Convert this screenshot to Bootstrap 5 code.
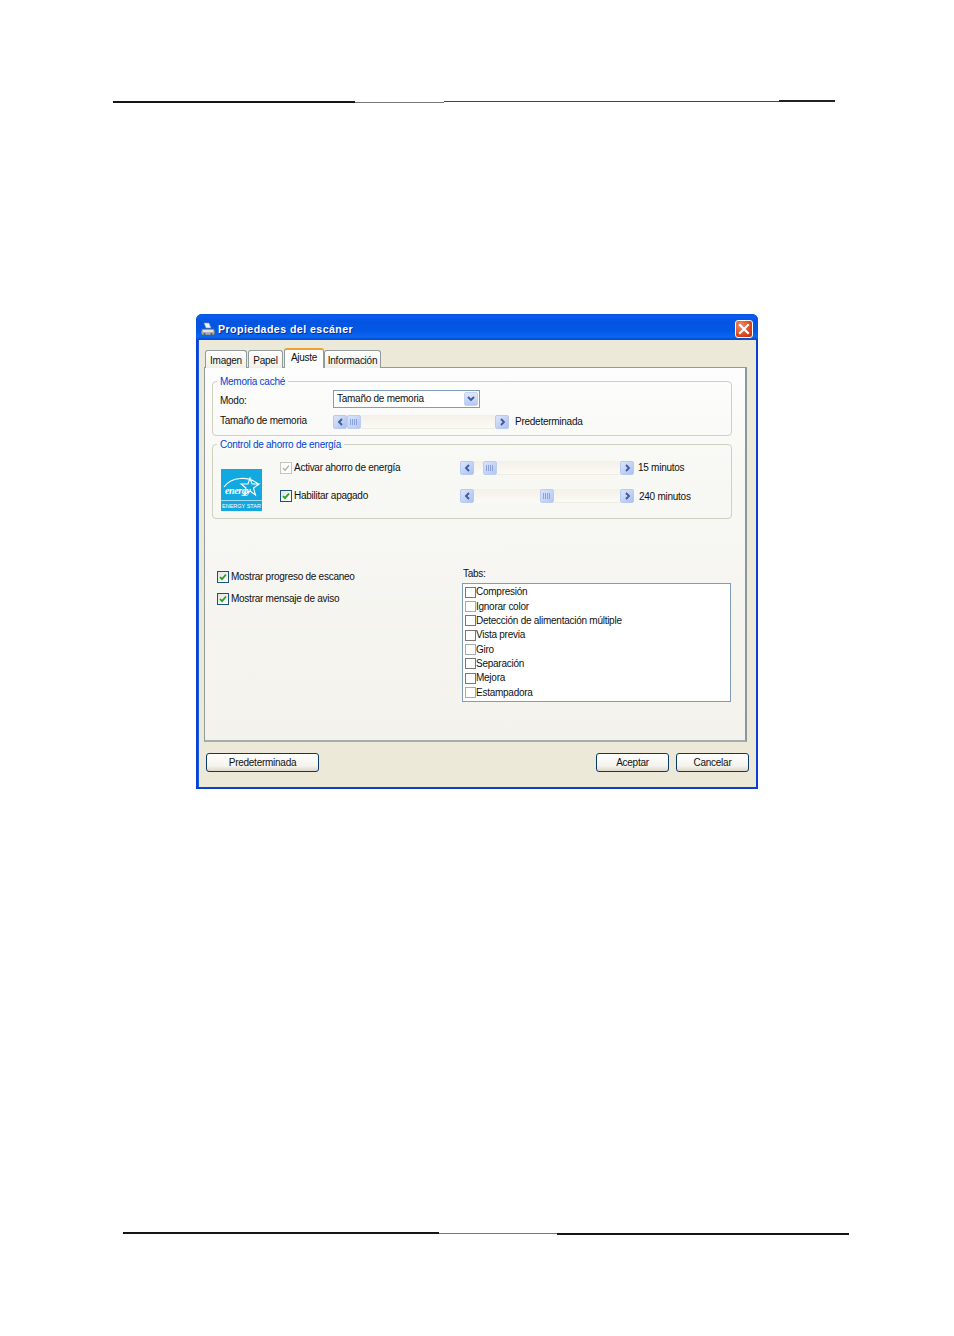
<!DOCTYPE html>
<html lang="es">
<head>
<meta charset="utf-8">
<title>Propiedades del escáner</title>
<link href="https://cdn.jsdelivr.net/npm/bootstrap@5.3.0/dist/css/bootstrap.min.css" rel="stylesheet">
<style>
html,body{background:#fff;margin:0}
.sheet{width:954px;height:1336px;position:relative;overflow:hidden;font-family:"Liberation Sans",Arial,sans-serif;font-size:10px;letter-spacing:-.26px;line-height:12px;color:#111}
.rule{display:flex;height:3px}
.rule-top{margin:100px 0 0 113px;width:722px}
.rule-bot{margin:443px 0 0 123px;width:726px}
.rule i{display:block}
.r-d{background:#151515;height:2px;margin-top:1px}
.r-m{background:#777;height:1px;margin-top:2px}
.r-g{background:#444;height:2px;margin-top:0}
.r-h{background:#222;height:2px;margin-top:0}
.win{width:562px;height:475px;margin:211px 0 0 196px;background:#0a3fd0;border-radius:6px 6px 0 0;padding:0 2px 2px}
.tbar{height:26px;margin:0 -2px;padding:4px 5px 0 5px;border-radius:6px 6px 0 0;background:linear-gradient(#0a56dc 0,#0a5cf0 10%,#0554e0 30%,#0358e6 65%,#0a66f0 88%,#0747c8 100%);color:#fff;font-weight:700;font-size:10.6px;letter-spacing:.45px}
.tbar .ttl{margin-left:3px;text-shadow:1px 1px 0 #0a2a90}
.xbtn{width:18px;height:18px;margin-top:-1px;border:1px solid #fff;border-radius:3px;background:radial-gradient(circle at 30% 30%,#f09070,#d9471c 60%,#c03010)}
.client{background:#ece9d8;height:447px;padding:9px 9px 0 5px;border-left:1px solid #1a5ae0;border-right:0}
.tabrow{height:19px;padding-left:1px;align-items:flex-end;position:relative;z-index:2;margin-bottom:-1px}
.xtab{height:18px;border:1px solid #919b9c;border-bottom:0;border-radius:3px 3px 0 0;background:linear-gradient(#fff,#f0efe6);padding:4px 0 0;text-align:center;margin-right:1px}
.xtab-on{height:20px;background:#fdfdfb;border-top:2px solid #f0a030;padding-top:2px;margin-right:0;margin-bottom:0}
.panel{height:375px;background:linear-gradient(#fdfdfd 0,#f8f8f5 25%,#f3f2ec 100%);border:1px solid #919b9c;border-right:2px solid #8c9799;border-bottom:2px solid #a3adad;padding:13px 14px 0 7px}
.grp{border:1px solid #d0d0bf;border-radius:4px;position:relative;width:520px}
.grp-a{height:55px;margin-bottom:8px;padding:8px 0 0 7px}
.grp-b{height:75px;padding:16px 0 0 8px}
.lgd{position:absolute;top:-6px;left:4px;padding:0 3px;color:#0046d5;background:#f9f9f6;white-space:nowrap}
.lbl-m{width:113px}
.lbl-modo{padding-top:4px}
.lbl-tam{padding-bottom:2px}
.row-tam{margin-top:7px}
.combo{width:147px;height:18px;border:1px solid #7f9db9;background:#fff;padding:0 1px 0 3px}
.drop{width:14px;height:14px;background:linear-gradient(#dfe8fb,#b6c8f3);border-radius:2px;border:1px solid #c4d2f4}
.sbar{height:14px;background:linear-gradient(#f3f1e8,#fbfaf6)}
.sarr{width:14px;height:14px;flex:none;background:linear-gradient(135deg,#dce6fb,#adc0ef);border:1px solid #b9caf0;border-radius:2px}
.strk{flex:1;height:14px;border-bottom:1px solid #efece2}
.sthumb{width:14px;height:14px;background:linear-gradient(135deg,#d9e4fb,#b5c7f2);border:1px solid #bccdf2;border-radius:2px}
.sthumb i{display:block;width:1px;height:6px;background:#8aa3de;margin:0 1px 0 0}
.sb-a{width:176px}
.sb-b{width:174px}
.ck{width:12px;height:12px;flex:none;background:linear-gradient(135deg,#e4e3db,#fff);border:1px solid #1c5180}
.ck-off{border-color:#c6c5b8;background:#fff}
.ck-sm{width:11px;height:11px;border:1px solid #777;background:#fff;flex:none}
.ck-sm.pale{border-color:#aaa}
.energy{width:41px;height:42px;flex:none;margin-right:18px;margin-top:8px}
.en-row{height:14px}
.en-lft{width:180px;gap:2px}
.val{margin-left:4px}
.val-low{margin-left:5px;padding-top:2px}
.lower{margin-left:5px;margin-top:51px}
.lcol{width:245px;padding-top:1px}
.lcol .ln{height:12px;margin-bottom:10px;gap:2px}
.rcol{width:269px;margin-top:-1px}
.tabsl{height:14px;margin-left:1px;line-height:10px}
.lbox{border:1px solid #7f9db9;background:#fff;height:119px;padding:1px 0 0 2px;margin:0;border-radius:0;width:269px}
.lbox .list-group-item{border:0;background:transparent;padding:0;height:14.35px;font-size:10px;line-height:14px;color:#111;display:flex;align-items:center}
.btnrow{margin-top:11px;padding-left:2px;padding-right:0;width:545px}
.xbtnp{height:19px;padding:0;font-size:10px;letter-spacing:-.26px;line-height:16px;color:#111;border:1px solid #0a3a6a;border-radius:3px;background:linear-gradient(#fff,#f4f3ed 70%,#dcd8ca)}
.w-p{width:113px}.w-a{width:73px;margin-right:7px}.w-c{width:73px}
.t{white-space:nowrap}
.pred{margin-left:6px}
</style>
</head>
<body>
<div class="sheet">
  <div class="rule rule-top">
    <i class="r-d" style="width:242px"></i><i class="r-m" style="width:89px"></i><i class="r-g" style="width:335px;height:1px;margin-top:1px"></i><i class="r-h" style="width:56px"></i>
  </div>

  <div class="win">
    <div class="tbar d-flex align-items-center">
      <svg width="14" height="15" viewBox="0 0 14 15" class="flex-none">
        <path d="M3 1l5 0 2 5H5z" fill="#eef2fa" stroke="#8796b8" stroke-width=".6"/>
        <path d="M1 7h12l1 3-1 3H1L0 10z" fill="#a9adb4" stroke="#5b6470" stroke-width=".6"/>
        <path d="M2 8h10v2H2z" fill="#dfe2e8"/>
        <circle cx="3.5" cy="12" r="1" fill="#4b5360"/><circle cx="10.5" cy="12" r="1" fill="#4b5360"/>
      </svg>
      <span class="ttl t flex-grow-1">Propiedades del escáner</span>
      <div class="xbtn d-flex align-items-center justify-content-center">
        <svg width="12" height="12" viewBox="0 0 12 12"><path d="M2 2l8 8M10 2l-8 8" stroke="#fff" stroke-width="2.2" stroke-linecap="square"/></svg>
      </div>
    </div>

    <div class="client">
      <div class="tabrow d-flex">
        <div class="xtab" style="width:42px">Imagen</div>
        <div class="xtab" style="width:35px">Papel</div>
        <div class="xtab xtab-on" style="width:40px">Ajuste</div>
        <div class="xtab" style="width:57px">Información</div>
      </div>

      <div class="panel">
        <div class="grp grp-a">
          <span class="lgd">Memoria caché</span>
          <div class="d-flex align-items-center">
            <span class="lbl-m lbl-modo t">Modo:</span>
            <div class="combo d-flex align-items-center justify-content-between">
              <span class="t">Tamaño de memoria</span>
              <span class="drop d-flex align-items-center justify-content-center"><svg width="8" height="6" viewBox="0 0 8 6"><path d="M1 1l3 3 3-3" fill="none" stroke="#3d5a9c" stroke-width="1.8"/></svg></span>
            </div>
          </div>
          <div class="d-flex align-items-center row-tam">
            <span class="lbl-m lbl-tam t">Tamaño de memoria</span>
            <div class="sbar sb-a d-flex">
              <span class="sarr d-flex align-items-center justify-content-center"><svg width="7" height="8" viewBox="0 0 7 8"><path d="M5 1L2 4l3 3" fill="none" stroke="#3d5a9c" stroke-width="1.8"/></svg></span>
              <span class="sthumb d-flex align-items-center justify-content-center" style="margin-left:0"><i></i><i></i><i></i><i></i></span>
              <span class="strk"></span>
              <span class="sarr d-flex align-items-center justify-content-center"><svg width="7" height="8" viewBox="0 0 7 8"><path d="M2 1l3 3-3 3" fill="none" stroke="#3d5a9c" stroke-width="1.8"/></svg></span>
            </div>
            <span class="t pred">Predeterminada</span>
          </div>
        </div>

        <div class="grp grp-b">
          <span class="lgd">Control de ahorro de energía</span>
          <div class="d-flex align-items-start">
            <svg class="energy" viewBox="0 0 41 42">
              <rect width="41" height="42" fill="#12a9e0"/>
              <rect y="31" width="41" height="1" fill="#fff" opacity=".6"/>
              <path d="M3 18C10 8 28 6 38 16" fill="none" stroke="#fff" stroke-width="1.2"/>
              <path d="M29 9l2 6 7 0-5.500 4 2 7-5.500-4-6 4 2-7-5-4 7 0z" fill="none" stroke="#fff" stroke-width="1.1"/>
              <text x="4" y="25" font-family="Liberation Serif" font-style="italic" font-weight="700" font-size="10" letter-spacing="-.4" fill="#fff">energy</text>
              <text x="20.500" y="39" text-anchor="middle" font-family="Liberation Sans" font-size="5.500" letter-spacing="0" fill="#fff">ENERGY STAR</text>
            </svg>
            <div class="flex-grow-1">
              <div class="d-flex align-items-center en-row">
                <div class="en-lft d-flex align-items-center">
                  <span class="ck ck-off d-flex align-items-center justify-content-center"><svg width="8" height="8" viewBox="0 0 8 8"><path d="M1 4l2 2.200L7 1.500" fill="none" stroke="#bdbcb0" stroke-width="1.600"/></svg></span>
                  <span class="t">Activar ahorro de energía</span>
                </div>
                <div class="sbar sb-b d-flex">
                  <span class="sarr d-flex align-items-center justify-content-center"><svg width="7" height="8" viewBox="0 0 7 8"><path d="M5 1L2 4l3 3" fill="none" stroke="#3d5a9c" stroke-width="1.8"/></svg></span>
                  <span class="sthumb d-flex align-items-center justify-content-center" style="margin-left:9px"><i></i><i></i><i></i><i></i></span>
                  <span class="strk"></span>
                  <span class="sarr d-flex align-items-center justify-content-center"><svg width="7" height="8" viewBox="0 0 7 8"><path d="M2 1l3 3-3 3" fill="none" stroke="#3d5a9c" stroke-width="1.8"/></svg></span>
                </div>
                <span class="t val">15 minutos</span>
              </div>
              <div class="d-flex align-items-center en-row" style="margin-top:14px">
                <div class="en-lft d-flex align-items-center">
                  <span class="ck d-flex align-items-center justify-content-center"><svg width="8" height="8" viewBox="0 0 8 8"><path d="M1 4l2 2.200L7 1.500" fill="none" stroke="#21a121" stroke-width="1.800"/></svg></span>
                  <span class="t">Habilitar apagado</span>
                </div>
                <div class="sbar sb-b d-flex">
                  <span class="sarr d-flex align-items-center justify-content-center"><svg width="7" height="8" viewBox="0 0 7 8"><path d="M5 1L2 4l3 3" fill="none" stroke="#3d5a9c" stroke-width="1.8"/></svg></span>
                  <span class="sthumb d-flex align-items-center justify-content-center" style="margin-left:66px"><i></i><i></i><i></i><i></i></span>
                  <span class="strk"></span>
                  <span class="sarr d-flex align-items-center justify-content-center"><svg width="7" height="8" viewBox="0 0 7 8"><path d="M2 1l3 3-3 3" fill="none" stroke="#3d5a9c" stroke-width="1.8"/></svg></span>
                </div>
                <span class="t val-low">240 minutos</span>
              </div>
            </div>
          </div>
        </div>

        <div class="lower d-flex align-items-start">
          <div class="lcol">
            <div class="ln d-flex align-items-center">
              <span class="ck d-flex align-items-center justify-content-center"><svg width="8" height="8" viewBox="0 0 8 8"><path d="M1 4l2 2.200L7 1.500" fill="none" stroke="#21a121" stroke-width="1.800"/></svg></span>
              <span class="t">Mostrar progreso de escaneo</span>
            </div>
            <div class="ln d-flex align-items-center">
              <span class="ck d-flex align-items-center justify-content-center"><svg width="8" height="8" viewBox="0 0 8 8"><path d="M1 4l2 2.200L7 1.500" fill="none" stroke="#21a121" stroke-width="1.800"/></svg></span>
              <span class="t">Mostrar mensaje de aviso</span>
            </div>
          </div>
          <div class="rcol">
            <div class="tabsl t">Tabs:</div>
            <ul class="lbox list-group">
              <li class="list-group-item"><span class="ck-sm"></span>Compresión</li>
              <li class="list-group-item"><span class="ck-sm pale"></span>Ignorar color</li>
              <li class="list-group-item"><span class="ck-sm"></span>Detección de alimentación múltiple</li>
              <li class="list-group-item"><span class="ck-sm"></span>Vista previa</li>
              <li class="list-group-item"><span class="ck-sm pale"></span>Giro</li>
              <li class="list-group-item"><span class="ck-sm"></span>Separación</li>
              <li class="list-group-item"><span class="ck-sm"></span>Mejora</li>
              <li class="list-group-item"><span class="ck-sm pale"></span>Estampadora</li>
            </ul>
          </div>
        </div>
      </div>

      <div class="btnrow d-flex">
        <button type="button" class="btn xbtnp w-p me-auto">Predeterminada</button>
        <button type="button" class="btn xbtnp w-a">Aceptar</button>
        <button type="button" class="btn xbtnp w-c">Cancelar</button>
      </div>
    </div>
  </div>

  <div class="rule rule-bot">
    <i class="r-d" style="width:316px;margin-top:0"></i><i class="r-m" style="width:118px;margin-top:1px"></i><i class="r-d" style="width:292px;margin-top:1px"></i>
  </div>
</div>
<script src="https://cdn.jsdelivr.net/npm/bootstrap@5.3.0/dist/js/bootstrap.bundle.min.js"></script>
</body>
</html>
